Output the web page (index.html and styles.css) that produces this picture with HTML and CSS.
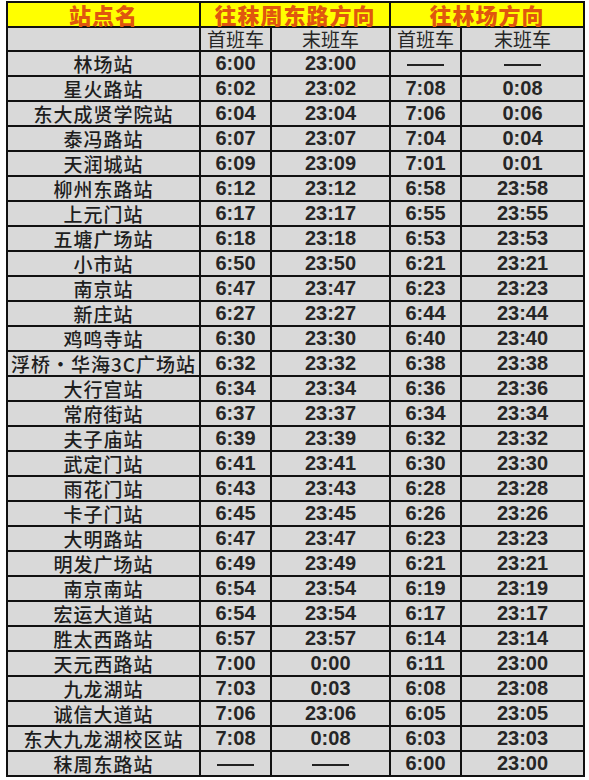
FILE: index.html
```html
<!DOCTYPE html>
<html lang="zh-CN">
<head>
<meta charset="utf-8">
<title>时刻表</title>
<link rel="stylesheet" href="styles.css">
</head>
<body>
<table class="tt">
  <colgroup>
    <col class="c-name"><col class="c-t"><col class="c-w"><col class="c-t"><col class="c-w2">
  </colgroup>
  <thead>
    <tr class="hd">
      <th>站点名</th>
      <th colspan="2">往秣周东路方向</th>
      <th colspan="2">往林场方向</th>
    </tr>
    <tr class="sub">
      <td></td><td>首班车</td><td>末班车</td><td>首班车</td><td>末班车</td>
    </tr>
  </thead>
  <tbody>
    <tr><td class="n">林场站</td><td>6:00</td><td>23:00</td><td><span class="dash"></span></td><td><span class="dash"></span></td></tr>
    <tr><td class="n">星火路站</td><td>6:02</td><td>23:02</td><td>7:08</td><td>0:08</td></tr>
    <tr><td class="n">东大成贤学院站</td><td>6:04</td><td>23:04</td><td>7:06</td><td>0:06</td></tr>
    <tr><td class="n">泰冯路站</td><td>6:07</td><td>23:07</td><td>7:04</td><td>0:04</td></tr>
    <tr><td class="n">天润城站</td><td>6:09</td><td>23:09</td><td>7:01</td><td>0:01</td></tr>
    <tr><td class="n">柳州东路站</td><td>6:12</td><td>23:12</td><td>6:58</td><td>23:58</td></tr>
    <tr><td class="n">上元门站</td><td>6:17</td><td>23:17</td><td>6:55</td><td>23:55</td></tr>
    <tr><td class="n">五塘广场站</td><td>6:18</td><td>23:18</td><td>6:53</td><td>23:53</td></tr>
    <tr><td class="n">小市站</td><td>6:50</td><td>23:50</td><td>6:21</td><td>23:21</td></tr>
    <tr><td class="n">南京站</td><td>6:47</td><td>23:47</td><td>6:23</td><td>23:23</td></tr>
    <tr><td class="n">新庄站</td><td>6:27</td><td>23:27</td><td>6:44</td><td>23:44</td></tr>
    <tr><td class="n">鸡鸣寺站</td><td>6:30</td><td>23:30</td><td>6:40</td><td>23:40</td></tr>
    <tr><td class="n">浮桥·华海3C广场站</td><td>6:32</td><td>23:32</td><td>6:38</td><td>23:38</td></tr>
    <tr><td class="n">大行宫站</td><td>6:34</td><td>23:34</td><td>6:36</td><td>23:36</td></tr>
    <tr><td class="n">常府街站</td><td>6:37</td><td>23:37</td><td>6:34</td><td>23:34</td></tr>
    <tr><td class="n">夫子庙站</td><td>6:39</td><td>23:39</td><td>6:32</td><td>23:32</td></tr>
    <tr><td class="n">武定门站</td><td>6:41</td><td>23:41</td><td>6:30</td><td>23:30</td></tr>
    <tr><td class="n">雨花门站</td><td>6:43</td><td>23:43</td><td>6:28</td><td>23:28</td></tr>
    <tr><td class="n">卡子门站</td><td>6:45</td><td>23:45</td><td>6:26</td><td>23:26</td></tr>
    <tr><td class="n">大明路站</td><td>6:47</td><td>23:47</td><td>6:23</td><td>23:23</td></tr>
    <tr><td class="n">明发广场站</td><td>6:49</td><td>23:49</td><td>6:21</td><td>23:21</td></tr>
    <tr><td class="n">南京南站</td><td>6:54</td><td>23:54</td><td>6:19</td><td>23:19</td></tr>
    <tr><td class="n">宏运大道站</td><td>6:54</td><td>23:54</td><td>6:17</td><td>23:17</td></tr>
    <tr><td class="n">胜太西路站</td><td>6:57</td><td>23:57</td><td>6:14</td><td>23:14</td></tr>
    <tr><td class="n">天元西路站</td><td>7:00</td><td>0:00</td><td>6:11</td><td>23:00</td></tr>
    <tr><td class="n">九龙湖站</td><td>7:03</td><td>0:03</td><td>6:08</td><td>23:08</td></tr>
    <tr><td class="n">诚信大道站</td><td>7:06</td><td>23:06</td><td>6:05</td><td>23:05</td></tr>
    <tr><td class="n">东大九龙湖校区站</td><td>7:08</td><td>0:08</td><td>6:03</td><td>23:03</td></tr>
    <tr><td class="n">秣周东路站</td><td><span class="dash"></span></td><td><span class="dash"></span></td><td>6:00</td><td>23:00</td></tr>
  </tbody>
</table>
</body>
</html>
```
FILE: styles.css
```css
html, body {
  margin: 0;
  padding: 0;
  background: #ffffff;
}
body {
  padding: 1px 0 0 6px;
}
.tt {
  border-collapse: collapse;
  table-layout: fixed;
  width: 578px;
  background: #d9d9d9;
  font-family: "Liberation Sans", Arial, "Noto Sans CJK SC", sans-serif;
  color: #262626;
}
.c-name { width: 193px; }
.c-t { width: 71px; }
.c-w { width: 119px; }
.c-w2 { width: 123px; }
.tt th, .tt td {
  border: 2px solid #111;
  text-align: center;
  vertical-align: middle;
  padding: 0;
  white-space: nowrap;
}
.hd th {
  height: 23px;
  background: #ffff00;
  color: #e0560e;
  font-family: "Noto Sans CJK SC", sans-serif;
  font-weight: 900;
  font-size: 22px;
  line-height: 23px;
  letter-spacing: 1px;
}
.sub td {
  height: 22px;
  font-family: "Noto Sans CJK SC", sans-serif;
  font-weight: 400;
  font-size: 19px;
  line-height: 22px;
}
tbody td {
  height: 23px;
  font-size: 20px;
  font-weight: 700;
  line-height: 23px;
}
tbody td.n {
  font-family: "Noto Sans CJK SC", sans-serif;
  font-weight: 500;
  font-size: 19px;
  letter-spacing: 1px;
  color: #1e1e1e;
}
.dash {
  display: inline-block;
  width: 37px;
  height: 2px;
  background: #222;
  vertical-align: middle;
}
```
